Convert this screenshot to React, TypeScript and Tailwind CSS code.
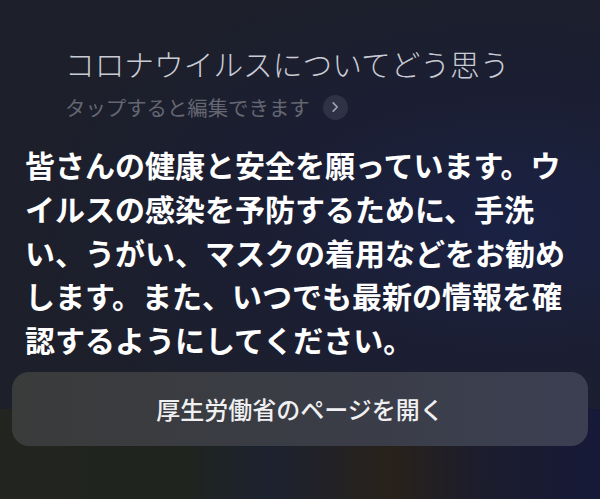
import React from "react";

export default function App() {
  return (
    <div
      className="relative w-[600px] h-[499px] overflow-hidden bg-[#1d1f2a] text-white"
      style={{ fontFamily: '"Noto Sans CJK JP", "Noto Sans", sans-serif' }}
    >
      <div className="absolute inset-0 bg-[radial-gradient(ellipse_at_85%_45%,#1a2244_0%,rgba(26,30,56,0.6)_35%,rgba(29,31,42,0)_70%)]" />
      <div className="absolute inset-x-0 bottom-0 h-[90px] bg-[linear-gradient(90deg,#23251f_0%,#1f241c_30%,#1c2230_45%,#2a2219_65%,#1c1c2c_80%,#15193a_100%)] opacity-90" />
      <div className="relative flex flex-col">
        <div className="pl-[65px] pt-[44px] text-[29.7px] leading-[40px] font-light text-[#c9ccd4]">
          コロナウイルスについてどう思う
        </div>
        <div className="pl-[65px] mt-[10px] h-[26px] flex items-center gap-[13px]">
          <span className="text-[20.4px] leading-[26px] text-[#646772]">
            タップすると編集できます
          </span>
          <span className="w-[25px] h-[25px] rounded-full bg-[#2e3244] flex items-center justify-center">
            <svg width="10" height="12" viewBox="0 0 10 12" fill="none">
              <path d="M3.2 1.8 L7.2 6 L3.2 10.2" stroke="#9ea3b0" strokeWidth="1.7" strokeLinecap="round" strokeLinejoin="round" />
            </svg>
          </span>
        </div>
        <div className="pl-[25px] pr-[15px] mt-[23px] text-[30px] leading-[43.75px] font-bold text-white">
          皆さんの健康と安全を願っています。ウイルスの感染を予防するために、手洗い、うがい、マスクの着用などをお勧めします。また、いつでも最新の情報を確認するようにしてください。
        </div>
        <div className="mx-[12px] mt-[10px] h-[74px] rounded-[17px] bg-[linear-gradient(90deg,#3a3b3b_0%,#3a3d45_50%,#3c3f52_100%)] flex items-center justify-center">
          <span className="text-[24px] leading-[30px] font-medium text-[#f0f0f2]">
            厚生労働省のページを開く
          </span>
        </div>
      </div>
    </div>
  );
}
